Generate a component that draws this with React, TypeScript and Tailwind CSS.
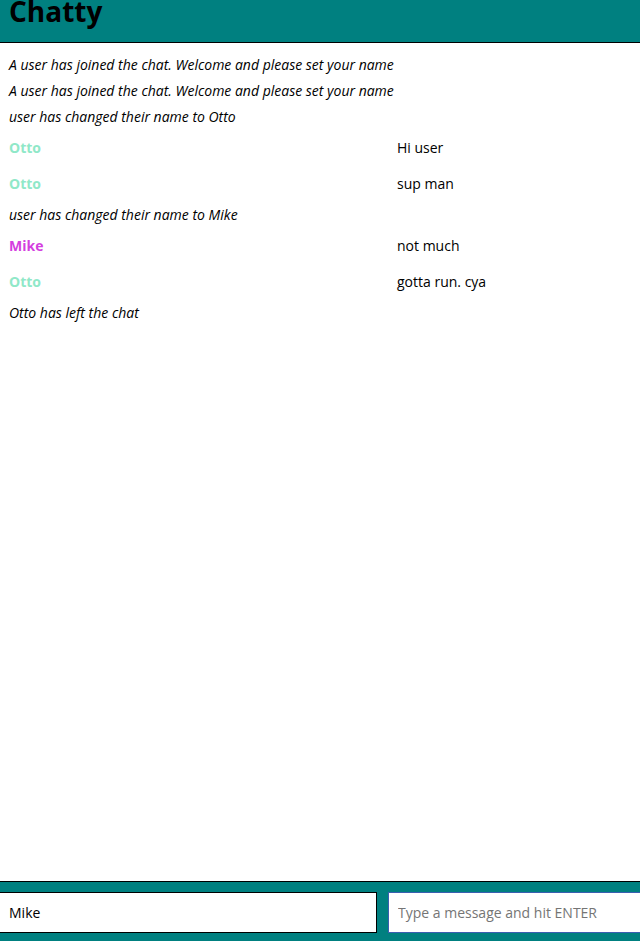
import React from 'react';

type Msg =
  | { kind: 'system'; text: string }
  | { kind: 'chat'; user: string; color: string; text: string };

const messages: Msg[] = [
  { kind: 'system', text: 'A user has joined the chat. Welcome and please set your name' },
  { kind: 'system', text: 'A user has joined the chat. Welcome and please set your name' },
  { kind: 'system', text: 'user has changed their name to Otto' },
  { kind: 'chat', user: 'Otto', color: 'text-[#90e8c8]', text: 'Hi user' },
  { kind: 'chat', user: 'Otto', color: 'text-[#90e8c8]', text: 'sup man' },
  { kind: 'system', text: 'user has changed their name to Mike' },
  { kind: 'chat', user: 'Mike', color: 'text-[#d43fe0]', text: 'not much' },
  { kind: 'chat', user: 'Otto', color: 'text-[#90e8c8]', text: 'gotta run. cya' },
  { kind: 'system', text: 'Otto has left the chat' },
];

export default function App() {
  return (
    <div className="h-screen flex flex-col bg-white text-black font-['Open_Sans',sans-serif] overflow-hidden">
      {/* Navbar */}
      <nav className="h-[43px] shrink-0 bg-[#008080] border-b border-black px-[9px]">
        <h1 className="text-[28px] font-bold leading-[22px]">Chatty</h1>
      </nav>

      {/* Messages */}
      <main className="flex-1 pt-[8px] overflow-hidden">
        {messages.map((m, i) =>
          m.kind === 'system' ? (
            <div key={i} className="h-[26px] flex items-center px-[9px] text-[14px] italic">
              {m.text}
            </div>
          ) : (
            <div key={i} className="h-[36px] flex items-center text-[14px]">
              <span className={`w-[388px] shrink-0 pl-[9px] font-bold ${m.color}`}>{m.user}</span>
              <span className="pl-[9px]">{m.text}</span>
            </div>
          )
        )}
      </main>

      {/* Chatbar */}
      <footer className="h-[60px] shrink-0 bg-[#008080] border-t border-black flex gap-[11px] pt-[10px]">
        <input
          defaultValue="Mike"
          className="w-[377px] h-[41px] bg-white border border-black border-l-0 px-[9px] text-[14px] outline-none"
        />
        <input
          placeholder="Type a message and hit ENTER"
          className="flex-1 h-[41px] bg-white border border-[#3a5fb0] border-r-0 px-[9px] text-[14px] placeholder:text-[#757575] outline-none"
        />
      </footer>
    </div>
  );
}
